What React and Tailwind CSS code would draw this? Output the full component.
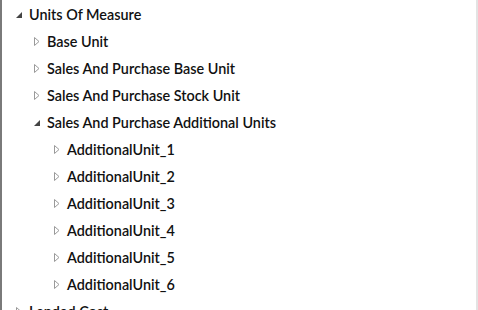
import React from "react";

const rows = [
  { label: "Units Of Measure", level: 0, open: true },
  { label: "Base Unit", level: 1 },
  { label: "Sales And Purchase Base Unit", level: 1 },
  { label: "Sales And Purchase Stock Unit", level: 1 },
  { label: "Sales And Purchase Additional Units", level: 1, open: true },
  { label: "AdditionalUnit_1", level: 2 },
  { label: "AdditionalUnit_2", level: 2 },
  { label: "AdditionalUnit_3", level: 2 },
  { label: "AdditionalUnit_4", level: 2 },
  { label: "AdditionalUnit_5", level: 2 },
  { label: "AdditionalUnit_6", level: 2 },
  { label: "Landed Cost", level: 0 },
];

const Expanded = () => (
  <svg width="6" height="6" viewBox="0 0 6 6" className="block">
    <polygon points="6,0 6,6 0,6" fill="#444" />
  </svg>
);

const Collapsed = () => (
  <svg width="6" height="9" viewBox="0 0 6 9" className="block">
    <polygon points="0.5,0.5 5,4.5 0.5,8.5" fill="none" stroke="#9a9a9a" strokeWidth="1" />
  </svg>
);

const indent = ["pl-[14px]", "pl-[32px]", "pl-[52px]"];

export default function App() {
  return (
    <div className="w-[478px] h-[310px] overflow-hidden bg-white border-l-2 border-l-[#7a7a7a] border-r-2 border-r-[#e3e3e3] font-['Lato',sans-serif]">
      <div className="pt-[1px]">
        {rows.map((r, i) => (
          <div key={i} className={`flex items-center h-[27px] ${indent[r.level]}`}>
            <div className="w-[13px] flex items-center">
              {r.open ? <Expanded /> : <Collapsed />}
            </div>
            <span className="text-[14.4px] font-semibold text-[#111] whitespace-nowrap">{r.label}</span>
          </div>
        ))}
      </div>
    </div>
  );
}
